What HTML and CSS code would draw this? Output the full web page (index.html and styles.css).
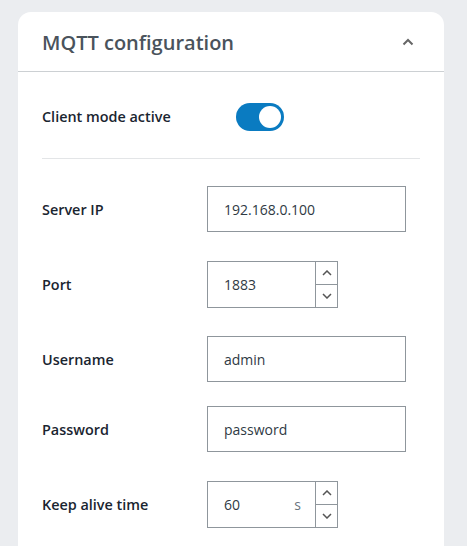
FILE: index.html
```html
<!DOCTYPE html>
<html>
<head>
<meta charset="utf-8">
<link rel="stylesheet" href="styles.css">
</head>
<body>
<div class="card">
  <div class="card-header">
    <h2 class="title">MQTT configuration</h2>
    <svg class="collapse" width="12" height="8" viewBox="0 0 12 8"><path d="M1.5 6.5 L6 2 L10.5 6.5" fill="none" stroke="#666" stroke-width="2"/></svg>
  </div>
  <div class="card-body">
    <div class="row toggle-row">
      <label class="label">Client mode active</label>
      <div class="toggle"><div class="knob"></div></div>
    </div>
    <div class="divider"></div>
    <div class="row r-ip">
      <label class="label">Server IP</label>
      <div class="input wide"><span class="val">192.168.0.100</span></div>
    </div>
    <div class="row r-port">
      <label class="label">Port</label>
      <div class="input num">
        <span class="val">1883</span>
        <div class="spin">
          <div class="btn"><svg width="10" height="6" viewBox="0 0 10 6"><path d="M1 5 L5 1 L9 5" fill="none" stroke="#555" stroke-width="1.5"/></svg></div>
          <div class="btn"><svg width="10" height="6" viewBox="0 0 10 6"><path d="M1 1 L5 5 L9 1" fill="none" stroke="#555" stroke-width="1.5"/></svg></div>
        </div>
      </div>
    </div>
    <div class="row r-user">
      <label class="label">Username</label>
      <div class="input wide"><span class="val">admin</span></div>
    </div>
    <div class="row r-pass">
      <label class="label">Password</label>
      <div class="input wide"><span class="val">password</span></div>
    </div>
    <div class="row r-keep">
      <label class="label">Keep alive time</label>
      <div class="input num">
        <span class="val">60</span>
        <span class="unit">s</span>
        <div class="spin">
          <div class="btn"><svg width="10" height="6" viewBox="0 0 10 6"><path d="M1 5 L5 1 L9 5" fill="none" stroke="#555" stroke-width="1.5"/></svg></div>
          <div class="btn"><svg width="10" height="6" viewBox="0 0 10 6"><path d="M1 1 L5 5 L9 1" fill="none" stroke="#555" stroke-width="1.5"/></svg></div>
        </div>
      </div>
    </div>
  </div>
</div>
</body>
</html>
```
FILE: styles.css
```css
html, body {
  margin: 0;
  padding: 0;
  background: #ebedf0;
  font-family: "Open Sans", "Noto Sans", sans-serif;
  height: 546px;
  overflow: hidden;
}
.card {
  margin: 12px 23px 0 18px;
  background: #fff;
  border-radius: 13px 13px 0 0;
  height: 560px;
}
.card-header {
  height: 59px;
  border-bottom: 1px solid #ccd0d3;
  display: flex;
  align-items: center;
  justify-content: space-between;
  padding: 0 30px 0 24px;
}
.title {
  margin: 0;
  font-size: 20px;
  font-weight: 600;
  color: #4a535c;
  padding-top: 1px;
}
.card-body {
  padding: 0 24px;
}
.row {
  display: flex;
  align-items: center;
}
.label {
  width: 165px;
  font-size: 14.4px;
  font-weight: 600;
  color: #1a2530;
}
.toggle-row {
  height: 28px;
  margin-top: 31px;
}
.toggle-row .label { width: 194px; padding-bottom: 2px; }
.toggle {
  width: 48px;
  height: 28px;
  border-radius: 14px;
  background: #0a7bc1;
  position: relative;
}
.knob {
  position: absolute;
  right: 3px;
  top: 3px;
  width: 22px;
  height: 22px;
  border-radius: 50%;
  background: #fff;
}
.divider {
  height: 1px;
  background: #e3e5e7;
  margin-top: 27px;
}
.input {
  box-sizing: border-box;
  height: 46px;
  border: 1px solid #8f969c;
  display: flex;
  align-items: center;
  font-size: 14px;
  color: #2f3a44;
  background: #fff;
}
.input.wide { width: 199px; }
.input.num { width: 131px; height: 47px; }
.val { padding-left: 16px; flex: 1; }
.unit { color: #6a747e; padding-right: 14px; }
.spin {
  width: 21px;
  height: 100%;
  border-left: 1px solid #8f969c;
  display: flex;
  flex-direction: column;
}
.btn {
  flex: 1;
  display: flex;
  align-items: center;
  justify-content: center;
}
.btn + .btn { border-top: 1px solid #8f969c; }
.r-ip { margin-top: 27px; }
.r-port { margin-top: 29px; }
.r-user { margin-top: 28px; }
.r-pass { margin-top: 24px; }
.r-keep { margin-top: 29px; }
```
